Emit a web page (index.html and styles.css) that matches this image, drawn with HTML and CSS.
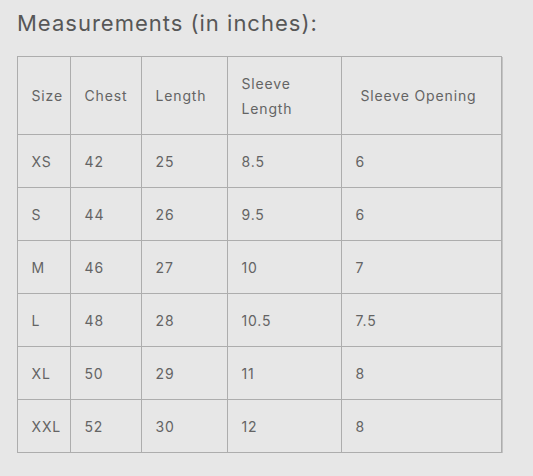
FILE: index.html
```html
<!DOCTYPE html>
<html lang="en">
<head>
<meta charset="utf-8">
<title>Measurements</title>
<link rel="stylesheet" href="styles.css">
</head>
<body>
<main class="page">
  <h2 class="title">Measurements (in inches):</h2>
  <table class="sizes">
    <colgroup>
      <col class="c-size">
      <col class="c-chest">
      <col class="c-length">
      <col class="c-sleeve">
      <col class="c-open">
    </colgroup>
    <thead>
      <tr>
        <th>Size</th>
        <th>Chest</th>
        <th>Length</th>
        <th>Sleeve<br>Length</th>
        <th class="h-open">Sleeve Opening</th>
      </tr>
    </thead>
    <tbody>
      <tr><td>XS</td><td>42</td><td>25</td><td>8.5</td><td>6</td></tr>
      <tr><td>S</td><td>44</td><td>26</td><td>9.5</td><td>6</td></tr>
      <tr><td>M</td><td>46</td><td>27</td><td>10</td><td>7</td></tr>
      <tr><td>L</td><td>48</td><td>28</td><td>10.5</td><td>7.5</td></tr>
      <tr><td>XL</td><td>50</td><td>29</td><td>11</td><td>8</td></tr>
      <tr><td>XXL</td><td>52</td><td>30</td><td>12</td><td>8</td></tr>
    </tbody>
  </table>
</main>
</body>
</html>
```

FILE: styles.css
```css
html, body {
  margin: 0;
  padding: 0;
  background: #e7e7e7;
}

.page {
  padding: 8px 0 0 17px;
  font-family: Inter, "Noto Sans", sans-serif;
  color: #5e5e5e;
}

.title {
  margin: 0 0 18px 0;
  font-size: 22px;
  font-weight: 400;
  line-height: 30px;
  letter-spacing: 1px;
  color: #575757;
}

.sizes {
  border-collapse: collapse;
  table-layout: fixed;
  width: 485px;
  margin-left: -0.5px;
  font-size: 14px;
  letter-spacing: 0.85px;
  box-shadow: 1px 1px 0 #c4c4c4;
}

.c-size { width: 53px; }
.c-chest { width: 71px; }
.c-length { width: 86px; }
.c-sleeve { width: 114px; }
.c-open { width: 160px; }

.sizes th,
.sizes td {
  border: 1px solid #adadad;
  padding: 13.5px 14px;
  line-height: 25px;
  text-align: left;
  vertical-align: middle;
  font-weight: 400;
  color: #646464;
}

.sizes th.h-open {
  padding-left: 19px;
}
```
